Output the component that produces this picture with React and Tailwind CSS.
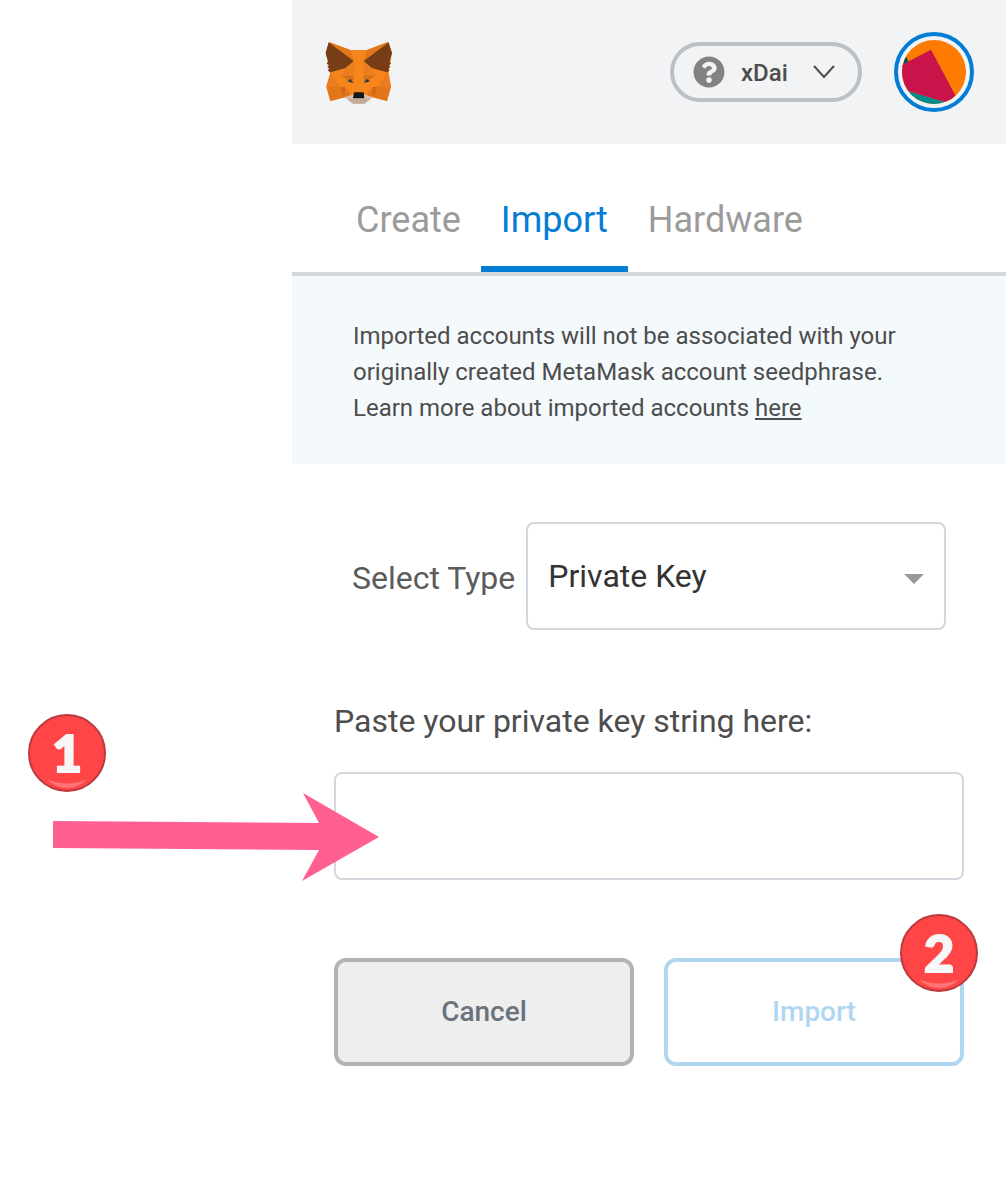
import React from "react";
import { FaQuestionCircle } from "react-icons/fa";

function FoxLogo() {
  return (
    <svg viewBox="45 30 204 189" className="h-[63px] w-[68px]" role="img" aria-label="MetaMask">
      <polygon fill="#f6851b" points="57,33 121,57 171,57 234,33 246,66 236,123 243,166 231,210 188,199 164,217 128,217 105,199 61,210 49,166 62,123 47,66" />
      <polygon fill="#e2761b" points="57,33 121,57 131,90" />
      <polygon fill="#e2761b" points="234,33 171,57 161,90" />
      <polygon fill="#763d16" points="56,34 131,90 106,112 61,125 53,117 58,113 52,107 57,103 50,98 54,91 47,66" />
      <polygon fill="#763d16" points="236,34 161,90 186,112 231,125 239,117 234,113 241,107 236,103 243,98 239,91 246,66" />
      <polygon fill="#ea7d20" points="62,124 49,166 91,168" />
      <polygon fill="#ea7d20" points="230,124 243,166 201,168" />
      <polygon fill="#f6851b" points="62,124 106,112 94,134 91,168" />
      <polygon fill="#f6851b" points="230,124 186,112 198,134 201,168" />
      <polygon fill="#e2761b" points="49,167 91,168 105,199 61,210" />
      <polygon fill="#e2761b" points="243,167 201,168 188,199 231,210" />
      <polygon fill="#d5671a" points="91,168 105,168 106,193 100,197" />
      <polygon fill="#d5671a" points="201,168 187,168 186,193 192,197" />
      <polygon fill="#e4751f" points="105,168 106,193 128,200" />
      <polygon fill="#e4751f" points="187,168 186,193 164,200" />
      <polygon fill="#ea7d20" points="94,134 106,112 131,92 131,134" />
      <polygon fill="#ea7d20" points="198,134 186,112 161,92 161,134" />
      <polygon fill="#d5701d" points="94,134 131,134 130,156" />
      <polygon fill="#d5701d" points="198,134 161,134 162,156" />
      <polygon fill="#233447" points="112,151 121,144 130,156" />
      <polygon fill="#233447" points="180,151 171,144 162,156" />
      <polygon fill="#d7c1b3" points="105,199 131,190 162,190 188,199 164,217 128,217" />
      <polygon fill="#c0ad9e" points="112,203 130,204 162,204 181,203 164,218 128,218" />
      <polygon fill="#161616" points="132,184 161,184 163,202 129,202" />
    </svg>
  );
}

function Jazzicon() {
  return (
    <svg viewBox="0 0 192 192" className="size-16 rounded-full" aria-hidden="true">
      <rect width="192" height="192" fill="#fc7b00" />
      <polygon fill="#01545a" points="0,40 12,48 20,67 0,80" />
      <polygon fill="#028a8c" points="0,146 21,154 130,186 150,192 0,192" />
      <polygon fill="#c9144b" points="87,29 160,166 150,192 21,154 0,146 0,74" />
    </svg>
  );
}

function Badge({ children, className }) {
  return (
    <span className={"absolute flex size-[78px] items-center justify-center " + className}>
      <svg viewBox="0 0 78 78" className="absolute inset-0 size-full" aria-hidden="true">
        <circle cx="39" cy="39" r="38" fill="#ff4545" stroke="#b93b40" strokeWidth="2" />
        <path d="M19 65 Q39 74 59 65 Q51 74 39 74 Q27 74 19 65Z" fill="#ff7376" />
      </svg>
      <span className="relative pb-0.5 font-['Lato',sans-serif] text-[52px] leading-[76px] font-black text-[#f7f7f7] [-webkit-text-stroke:2px_#f7f7f7]">{children}</span>
    </span>
  );
}

const tabs = ["Create", "Import", "Hardware"];

export default function App() {
  return (
    <div className="min-h-screen bg-white pl-[292px] font-['Roboto',sans-serif] text-[#4d4d4d]">
      <header className="flex h-36 items-center bg-[#f2f3f4] pr-8 pl-[33px]">
        <FoxLogo />
        <button type="button" className="ml-auto flex h-[60px] w-48 items-center rounded-full border-4 border-[#bbc0c5] pl-[19px] text-2xl font-medium">
          <FaQuestionCircle className="size-8 text-[#808284]" />
          <span className="ml-4 pt-0.5">xDai</span>
          <svg viewBox="0 0 22 14" className="mr-[23px] ml-auto h-3.5 w-[22px]" fill="none" stroke="#4d4d4d" strokeWidth="2" aria-hidden="true">
            <path d="M1 1 11 12 21 1" />
          </svg>
        </button>
        <button type="button" aria-label="Account" className="ml-8 flex size-20 items-center justify-center rounded-full border-4 border-[#037dd6]">
          <Jazzicon />
        </button>
      </header>

      <nav className="flex h-[132px] border-b-4 border-[#d2d8dd] px-11">
        {tabs.map((tab) => (
          <button
            key={tab}
            type="button"
            className={
              tab === "Import"
                ? "border-b-[6px] border-[#037dd6] px-5 pt-[30px] text-4xl text-[#037dd6]"
                : "border-b-[6px] border-transparent px-5 pt-[30px] text-4xl text-[#9b9b9b]"
            }
          >
            {tab}
          </button>
        ))}
      </nav>

      <main>
        <p className="bg-[#f4f9fc] pt-[42px] pr-[90px] pb-[38px] pl-[61px] text-2xl leading-9">
          Imported accounts will not be associated with your originally created MetaMask account seedphrase.
          <br />
          Learn more about imported accounts{" "}
          <a href="#here" className="underline">
            here
          </a>
        </p>

        <form className="px-[42px] pt-[58px]" onSubmit={(e) => e.preventDefault()}>
          <div className="flex items-center gap-[11px] px-[18px]">
            <label htmlFor="type" className="shrink-0 pt-1 text-[32px] text-[#5b5b5b]">
              Select Type
            </label>
            <div className="relative flex-1">
              <select id="type" className="block h-[108px] w-full appearance-none rounded-lg border-2 border-[#d2d8dd] bg-white px-5 text-[32px] text-[#333333]">
                <option>Private Key</option>
                <option>JSON File</option>
              </select>
              <svg viewBox="0 0 20 10" className="pointer-events-none absolute top-[52px] right-[22px] h-2.5 w-5" fill="#999999" aria-hidden="true">
                <path d="M0 0H20L10 10Z" />
              </svg>
            </div>
          </div>

          <label htmlFor="key" className="mt-[67px] block text-[32px] leading-12">
            Paste your private key string here:
          </label>
          <div className="relative mt-[27px]">
            <input id="key" type="password" className="block h-[108px] w-full rounded-lg border-2 border-[#d2d8dd] bg-white px-5 text-[32px]" />
            <svg viewBox="0 0 326 88" className="pointer-events-none absolute top-[21px] -left-[281px] h-[88px] w-[326px]" fill="#ff6090" aria-hidden="true">
              <path d="M0 28 266 30 250 0 326 44 249 88 266 57 0 55Z" />
            </svg>
            <Badge className="-top-[58px] -left-[306px]">1</Badge>
          </div>

          <div className="relative mt-[78px] grid grid-cols-2 gap-[30px] text-[28px] font-medium">
            <button type="button" className="h-[108px] rounded-xl border-4 border-[#b3b3b3] bg-[#eeeeee] text-[#6a737d]">
              Cancel
            </button>
            <button type="submit" disabled className="h-[108px] rounded-xl border-4 border-[#b0d7f2] bg-white text-[#b0d7f2]">
              Import
            </button>
            <Badge className="-top-11 -right-3.5">2</Badge>
          </div>
        </form>
      </main>
    </div>
  );
}
